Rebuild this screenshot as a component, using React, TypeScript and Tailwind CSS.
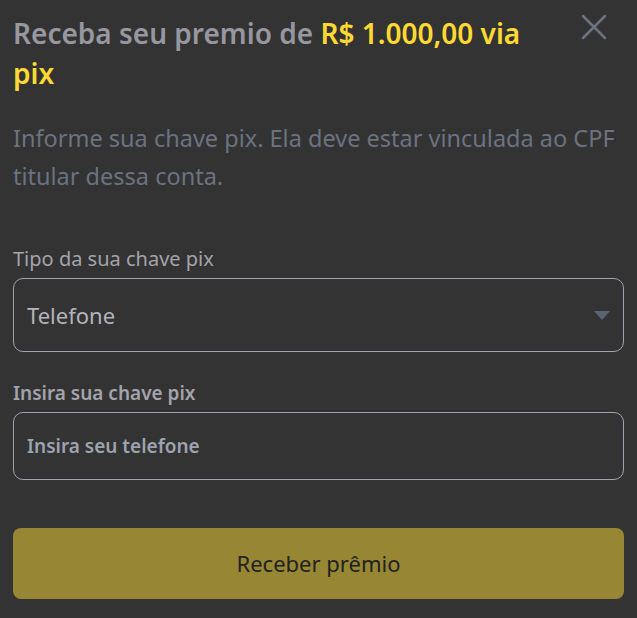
import { useState } from 'react';

export default function App() {
  const [tipo, setTipo] = useState('Telefone');
  const [chave, setChave] = useState('');

  return (
    <div className="min-h-screen bg-[#333333] px-[13px] pt-[13px] font-['Noto_Sans',sans-serif]">
      <div className="flex items-start justify-between">
        <h2 className="w-[540px] text-[28px] font-semibold leading-[40px] text-[#9797a0]">
          Receba seu premio de <span className="text-[#fcd932]">R$ 1.000,00 via pix</span>
        </h2>
        <button className="mt-[1px] mr-[17px] text-[#6b7280]" aria-label="Fechar">
          <svg width="26" height="26" viewBox="0 0 26 26" fill="none" stroke="currentColor" strokeWidth="2.5" strokeLinecap="round">
            <path d="M2 2L24 24M24 2L2 24" />
          </svg>
        </button>
      </div>

      <p className="mt-[26px] text-[23.5px] leading-[38px] text-[#6b7280]">
        Informe sua chave pix. Ela deve estar vinculada ao CPF titular dessa conta.
      </p>

      <div className="mt-[51px]">
        <label className="block text-[20px] leading-[26px] text-[#a3a3ab]">Tipo da sua chave pix</label>
        <div className="relative mt-[6px]">
          <select
            value={tipo}
            onChange={(e) => setTipo(e.target.value)}
            className="h-[74px] w-full appearance-none rounded-[10px] border border-[#9ca3af] bg-transparent px-[13px] text-[22px] text-[#b3b3bb] outline-none"
          >
            <option>Telefone</option>
            <option>CPF</option>
            <option>E-mail</option>
            <option>Chave aleatória</option>
          </select>
          <svg className="pointer-events-none absolute right-[14px] top-[33px]" width="16" height="9" viewBox="0 0 16 9">
            <path d="M0 0H16L8 9Z" fill="#5c6372" />
          </svg>
        </div>
      </div>

      <div className="mt-[28px]">
        <label className="block text-[19px] font-semibold leading-[26px] text-[#a3a3ab]">Insira sua chave pix</label>
        <input
          value={chave}
          onChange={(e) => setChave(e.target.value)}
          placeholder="Insira seu telefone"
          className="mt-[6px] h-[68px] w-full rounded-[10px] border border-[#9ca3af] bg-transparent px-[13px] text-[19px] font-semibold text-[#d1d5db] outline-none placeholder:text-[#9ca3af]"
        />
      </div>

      <button className="mt-[48px] h-[71px] w-full rounded-[8px] bg-[#978634] text-[22px] text-[#222222]">
        Receber prêmio
      </button>
    </div>
  );
}
